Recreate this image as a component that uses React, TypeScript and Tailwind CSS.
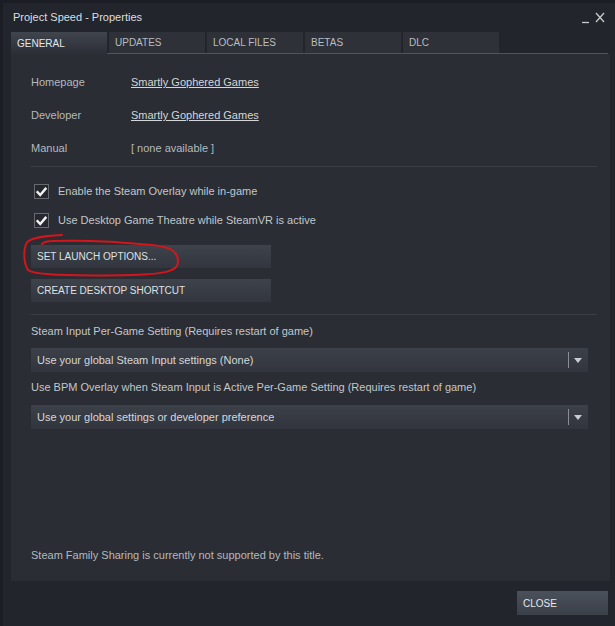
import React from "react";

const font = { fontFamily: '"Liberation Sans", Arial, sans-serif' };

function Checkbox({ label }: { label: string }) {
  return (
    <div className="flex h-[29px] items-center">
      <div className="ml-[3px] flex h-[15px] w-[15px] items-center justify-center border border-[#66696e] bg-[#25282e]">
        <svg width="11" height="10" viewBox="0 0 11 10">
          <path d="M1.5 5.2 L4.2 8 L9.5 1.8" fill="none" stroke="#f2f2f2" strokeWidth="2.4" strokeLinecap="square" />
        </svg>
      </div>
      <span className="ml-[9px] text-[11px] text-[#c3c6ca]">{label}</span>
    </div>
  );
}

function Dropdown({ label }: { label: string }) {
  return (
    <div className="flex h-[24px] w-[557px] items-center bg-gradient-to-b from-[#3c4049] to-[#32353d] pl-[6px] text-[11px] text-[#d5d7da]">
      <span className="flex-1">{label}</span>
      <div className="h-[16px] w-px bg-[#8a8d92]" />
      <svg className="ml-[5px] mr-[6px]" width="8" height="5" viewBox="0 0 8 5">
        <path d="M0 0 L8 0 L4 5 Z" fill="#c8cbcf" />
      </svg>
    </div>
  );
}

function Button({ label }: { label: string }) {
  return (
    <div className="flex h-[23px] w-[240px] items-center bg-gradient-to-b from-[#3e424a] to-[#33363e] pl-[6px] text-[10px] text-[#dfe1e3]">
      {label}
    </div>
  );
}

export default function App() {
  const tabs = ["GENERAL", "UPDATES", "LOCAL FILES", "BETAS", "DLC"];
  return (
    <div className="h-[626px] w-[615px] overflow-hidden bg-[#1b1d24] pl-[3px] pt-[3px]" style={font}>
      <div className="flex h-full flex-col bg-[#22252b]">
        {/* title bar */}
        <div className="flex h-[29px] items-center pl-[10px] pr-[9px]">
          <span className="flex-1 text-[11px] text-[#dcdfe2]">Project Speed - Properties</span>
          <svg width="24" height="12" viewBox="0 0 24 12">
            <path d="M0 10.5 L7 10.5" stroke="#c8cacd" strokeWidth="1.3" />
            <path d="M14 1 L22 10 M22 1 L14 10" stroke="#c8cacd" strokeWidth="1.3" />
          </svg>
        </div>
        {/* tabs */}
        <div className="ml-[8px] mr-[7px] flex h-[22px] gap-[2px] border-b border-[#50545b]">
          {tabs.map((t, i) => (
            <div
              key={t}
              className={
                i === 0
                  ? "-mb-px flex h-[23px] w-[96px] items-center bg-gradient-to-b from-[#40454e] to-[#2a2d34] pl-[6px] text-[10px] text-[#e4e6e8]"
                  : "flex h-[21px] w-[96px] items-center bg-[#2e3138] pl-[6px] text-[10px] text-[#b9bdc1]"
              }
            >
              {t}
            </div>
          ))}
        </div>
        {/* content panel */}
        <div className="relative ml-[8px] mr-[5px] flex h-[527px] flex-col bg-[#2a2d34] pl-[20px] pr-[13px] pt-[12px]">
          <div className="flex h-[33px] items-center text-[11px]">
            <span className="w-[100px] text-[#b5b9bd]">Homepage</span>
            <span className="text-[#d3d6d9] underline">Smartly Gophered Games</span>
          </div>
          <div className="flex h-[33px] items-center text-[11px]">
            <span className="w-[100px] text-[#b5b9bd]">Developer</span>
            <span className="text-[#d3d6d9] underline">Smartly Gophered Games</span>
          </div>
          <div className="flex h-[33px] items-center text-[11px]">
            <span className="w-[100px] text-[#b5b9bd]">Manual</span>
            <span className="text-[#b5b9bd]">[ none available ]</span>
          </div>
          <div className="mt-[1px] h-px bg-[#3b3e45]" />
          <div className="mt-[10px]">
            <Checkbox label="Enable the Steam Overlay while in-game" />
            <Checkbox label="Use Desktop Game Theatre while SteamVR is active" />
          </div>
          <div className="mt-[10px] flex flex-col gap-[11px]">
            <Button label="SET LAUNCH OPTIONS..." />
            <Button label="CREATE DESKTOP SHORTCUT" />
          </div>
          <div className="mt-[12px] h-px bg-[#3b3e45]" />
          <div className="mt-[9px] flex h-[15px] items-center text-[11px] text-[#c3c6ca]">
            Steam Input Per-Game Setting (Requires restart of game)
          </div>
          <div className="mt-[9px]">
            <Dropdown label="Use your global Steam Input settings (None)" />
          </div>
          <div className="mt-[8px] flex h-[15px] items-center text-[11px] text-[#c3c6ca]">
            Use BPM Overlay when Steam Input is Active Per-Game Setting (Requires restart of game)
          </div>
          <div className="mt-[10px]">
            <Dropdown label="Use your global settings or developer preference" />
          </div>
          <div className="mt-auto mb-[18px] text-[11px] text-[#b5b9bd]">
            Steam Family Sharing is currently not supported by this title.
          </div>
          {/* red hand-drawn ellipse */}
          <svg
            className="pointer-events-none absolute left-[11px] top-[178px]"
            width="162"
            height="48"
            viewBox="0 0 162 48"
          >
            <path
              d="M40 3 C20 4 6 6 4 12 C1 20 2 32 6 38 C12 44 60 44 110 43 C140 42 156 40 156 30 C156 20 150 15 130 13 C100 10 60 8 30 9 C25 9 22 10 20 12"
              fill="none"
              stroke="#d4151b"
              strokeWidth="2"
              strokeLinecap="round"
            />
          </svg>
        </div>
        {/* footer */}
        <div className="flex flex-1 items-start justify-end pr-[7px] pt-[10px]">
          <div className="flex h-[24px] w-[91px] items-center bg-gradient-to-b from-[#4b515b] to-[#3a3f48] pl-[6px] text-[10px] text-[#e6e8ea]">
            CLOSE
          </div>
        </div>
      </div>
    </div>
  );
}
